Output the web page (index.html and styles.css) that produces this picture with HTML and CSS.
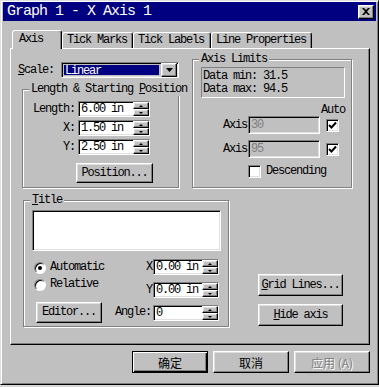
FILE: index.html
```html
<!DOCTYPE html>
<html lang="en">
<head>
  <meta charset="UTF-8" />
  <title>Graph 1 - X Axis 1</title>
  <link rel="stylesheet" href="styles.css">
</head>
<body>
  <div class="dialog">
    <div class="titlebar">
      <span class="caption">Graph 1 - X Axis 1</span>
      <button class="close"><svg width="8" height="7" viewBox="0 0 8 7"><path d="M0 0h2l2 2 2-2h2L5 3.5 8 7H6L4 5 2 7H0l3-3.5z" fill="#000"/></svg></button>
    </div>

    <div class="tabs">
      <div class="tab active">Axis</div>
      <div class="tab marks">Tick Marks</div>
      <div class="tab labels">Tick Labels</div>
      <div class="tab props">Line Properties</div>
    </div>

    <div class="panel">
      <div class="top">
        <div class="left-col">
          <div class="scale-row">
            <span class="lbl scale-lbl"><u>S</u>cale:</span>
            <div class="combo">
              <span class="combo-value">Linear</span>
              <span class="combo-btn"><svg width="7" height="4" viewBox="0 0 7 4"><path d="M0 0h7L3.5 4z" fill="#000"/></svg></span>
            </div>
          </div>

          <fieldset class="group length">
            <legend>Length &amp; Starting <u>P</u>osition</legend>
            <div class="frow">
              <span class="lbl">Length:</span>
              <div class="spin"><span class="spin-text">6.00 in</span><span class="spin-btns"><i class="up"></i><i class="down"></i></span></div>
            </div>
            <div class="frow">
              <span class="lbl">X:</span>
              <div class="spin"><span class="spin-text">1.50 in</span><span class="spin-btns"><i class="up"></i><i class="down"></i></span></div>
            </div>
            <div class="frow">
              <span class="lbl">Y:</span>
              <div class="spin"><span class="spin-text">2.50 in</span><span class="spin-btns"><i class="up"></i><i class="down"></i></span></div>
            </div>
            <button class="btn position">Position...</button>
          </fieldset>
        </div>

        <fieldset class="group limits">
          <legend>Axis Limits</legend>
          <div class="data-box">Data min: 31.5<br>Data max: 94.5</div>
          <div class="auto">Auto</div>
          <div class="lrow">
            <span class="lbl">Axis</span>
            <div class="field disabled">30</div>
            <span class="check on"><svg width="9" height="9" viewBox="0 0 9 9"><path d="M1 4l2.5 2.5L8 1.5" stroke="#000" stroke-width="2" fill="none"/></svg></span>
          </div>
          <div class="lrow">
            <span class="lbl">Axis</span>
            <div class="field disabled">95</div>
            <span class="check on"><svg width="9" height="9" viewBox="0 0 9 9"><path d="M1 4l2.5 2.5L8 1.5" stroke="#000" stroke-width="2" fill="none"/></svg></span>
          </div>
          <div class="desc-row">
            <span class="check"></span>
            <span class="desc-lbl">Descending</span>
          </div>
        </fieldset>
      </div>

      <div class="bottom">
        <fieldset class="group title-group">
          <legend><u>T</u>itle</legend>
          <div class="tbox"></div>
          <div class="opts">
            <div class="radios">
              <div class="radio-row"><span class="radio on"></span><span class="radio-lbl">Automatic</span></div>
              <div class="radio-row"><span class="radio"></span><span class="radio-lbl">Relative</span></div>
            </div>
            <div class="xy">
              <div class="frow">
                <span class="lbl short">X</span>
                <div class="spin narrow"><span class="spin-text">0.00 in</span><span class="spin-btns"><i class="up"></i><i class="down"></i></span></div>
              </div>
              <div class="frow">
                <span class="lbl short">Y</span>
                <div class="spin narrow"><span class="spin-text">0.00 in</span><span class="spin-btns"><i class="up"></i><i class="down"></i></span></div>
              </div>
            </div>
          </div>
          <div class="rowc">
            <button class="btn editor">Editor...</button>
            <div class="frow">
              <span class="lbl angle">Angle:</span>
              <div class="spin narrow"><span class="spin-text">0</span><span class="spin-btns"><i class="up"></i><i class="down"></i></span></div>
            </div>
          </div>
        </fieldset>

        <div class="side">
          <button class="btn wide"><u>G</u>rid Lines...</button>
          <button class="btn wide"><u>H</u>ide axis</button>
        </div>
      </div>
    </div>

    <div class="footer">
      <button class="btn cjk default">确定</button>
      <button class="btn cjk">取消</button>
      <button class="btn cjk" disabled>应用 (A)</button>
    </div>
  </div>
</body>
</html>
```

FILE: styles.css
```css
* { box-sizing: border-box; margin: 0; padding: 0; }
body { background: #d6d6d6; color: #000; font: 12px/13px "Liberation Mono", "Noto Sans CJK SC", monospace; letter-spacing: -1.2px; }
button { font: inherit; letter-spacing: inherit; color: inherit; background: #c0c0c0; }
u { text-decoration: underline; text-underline-offset: 1px; }

/* window frame */
.dialog { width: 379px; height: 385px; padding: 1px 2px; background: #c0c0c0; border: 1px solid; border-color: #dfdfdf #000 #000 #dfdfdf; box-shadow: inset 1px 1px #fff, inset -1px -1px #808080; }
.titlebar { display: flex; align-items: center; height: 19px; background: #000080; color: #fff; }
.caption { padding-left: 4px; font-size: 15px; line-height: 19px; letter-spacing: -1px; }
.close { display: flex; align-items: center; justify-content: center; width: 16px; height: 14px; margin: 0 2px 0 auto; }

/* raised / sunken bits */
.btn, .close, .combo-btn, .spin-btns i { border: 1px solid; border-color: #fff #000 #000 #fff; box-shadow: inset -1px -1px #808080, inset 1px 1px #dfdfdf; }
.spin, .field, .combo, .tbox, .check, .data-box { border: 1px solid; border-color: #808080 #fff #fff #808080; }
.spin, .field, .combo, .tbox, .check { box-shadow: inset 1px 1px #000, inset -1px -1px #dfdfdf; }

/* tabs */
.tabs { display: flex; align-items: flex-end; height: 27px; padding-left: 9px; }
.tab { height: 16px; padding-left: 4px; border: 1px solid; border-bottom: 0; border-color: #fff #000 #000 #fff; border-radius: 3px 3px 0 0; box-shadow: inset -1px 0 #808080; line-height: 15px; white-space: nowrap; }
.tab.active { position: relative; z-index: 1; width: 50px; height: 19px; margin-bottom: -1px; padding-left: 6px; background: #c0c0c0; line-height: 17px; }
.tab.marks { width: 71px; }
.tab.labels { width: 78px; }
.tab.props { width: 101px; }

.panel { width: 360px; height: 297px; margin-left: 7px; border: 1px solid; border-color: #fff #000 #000 #fff; box-shadow: inset -1px -1px #808080; }
.top { display: flex; align-items: flex-start; }
.left-col { width: 162px; margin-left: 7px; }

/* group boxes */
.group { min-width: 0; border: 1px solid #808080; box-shadow: 1px 1px #fff, inset 1px 1px #fff; }
legend { margin-left: 6px; padding: 0 2px; line-height: 13px; background: #c0c0c0; white-space: nowrap; }

.scale-row { display: flex; align-items: center; height: 16px; margin-top: 13px; }
.scale-lbl { width: 43px; }
.combo { display: flex; width: 118px; height: 16px; padding: 1px; }
.combo-value { flex: 1; margin: 1px 2px 1px 1px; padding-left: 1px; background: #000080; color: #fff; line-height: 12px; }
.combo-btn { display: flex; align-items: center; justify-content: center; width: 16px; height: 14px; margin-top: -1px; }

.length { width: 157px; margin: 5px 0 0 4px; padding: 5px 0 4px; }
.frow { display: flex; align-items: center; height: 16px; }
.frow + .frow { margin-top: 3px; }
.length .lbl { width: 52px; margin-right: 3px; text-align: right; }
.spin { display: flex; width: 72px; height: 16px; padding: 1px 0 0 1px; background: #fff; }
.spin.narrow { width: 66px; }
.spin-text { flex: 1; padding-left: 1px; line-height: 13px; white-space: nowrap; overflow: hidden; }
.spin-btns { display: flex; flex-direction: column; width: 16px; margin-top: -1px; }
.spin-btns i { position: relative; flex: 1; background: #c0c0c0; }
.spin-btns i::after { content: ""; position: absolute; left: 5px; top: 2px; border: 2px solid transparent; border-left-width: 2px; border-right-width: 2px; }
.spin-btns .up::after { top: 0; border-bottom-color: #000; }
.spin-btns .down::after { top: 2px; border-top-color: #000; }
.position { width: 77px; height: 20px; margin: 8px 0 0 53px; }

.limits { width: 160px; height: 135px; margin: 4px 0 0 12px; padding-top: 1px; }
.data-box { width: 144px; height: 31px; margin-left: 8px; padding: 2px 0 0 1px; line-height: 13px; }
.auto { margin-top: 7px; padding-right: 6px; text-align: right; line-height: 11px; }
.lrow { display: flex; align-items: center; height: 18px; }
.lrow + .lrow { margin-top: 6px; }
.lrow .lbl { width: 54px; margin-right: 1px; text-align: right; }
.field { width: 72px; height: 18px; padding: 2px 0 0 2px; line-height: 13px; }
.field.disabled { color: #808080; }
.check { display: flex; align-items: center; justify-content: center; width: 13px; height: 13px; margin-left: 6px; background: #fff; }
.desc-row { display: flex; align-items: center; height: 13px; margin: 7px 0 0 55px; }
.desc-row .check { margin-left: 0; }
.desc-lbl { margin-left: 5px; }

/* bottom half */
.bottom { display: flex; align-items: flex-start; margin-top: 6px; }
.title-group { width: 206px; height: 133px; margin-left: 12px; padding-top: 3px; }
.tbox { width: 189px; height: 41px; margin-left: 8px; background: #fff; }
.opts { display: flex; justify-content: space-between; margin-top: 8px; padding: 0 9px 0 10px; }
.radio-row { display: flex; align-items: center; height: 17px; }
.radio { position: relative; width: 12px; height: 12px; border: 1px solid; border-color: #808080 #fff #fff #808080; border-radius: 50%; background: #fff; box-shadow: inset 1px 1px #000; }
.radio.on::after { content: ""; position: absolute; left: 3px; top: 3px; width: 4px; height: 4px; border-radius: 50%; background: #000; }
.radio-lbl { margin-left: 4px; }
.xy .frow + .frow { margin-top: 7px; }
.lbl.short { margin-right: 1px; }
.rowc { display: flex; align-items: center; justify-content: space-between; height: 21px; margin-top: 4px; padding: 0 9px 0 12px; }
.editor { width: 66px; height: 21px; }
.lbl.angle { margin-right: 2px; }

.side { display: flex; flex-direction: column; gap: 8px; margin: 80px 0 0 29px; }
.wide { width: 85px; height: 22px; }

/* dialog buttons */
.footer { display: flex; justify-content: flex-end; gap: 5px; margin: 6px 6px 0 0; }
.cjk { width: 76px; height: 22px; font-family: "Noto Sans CJK SC", sans-serif; letter-spacing: 0; }
.default { border-color: #000; box-shadow: inset 1px 1px #fff, inset -1px -1px #000, inset -2px -2px #808080; }
.btn:disabled { color: #808080; text-shadow: 1px 1px #fff; }
```
